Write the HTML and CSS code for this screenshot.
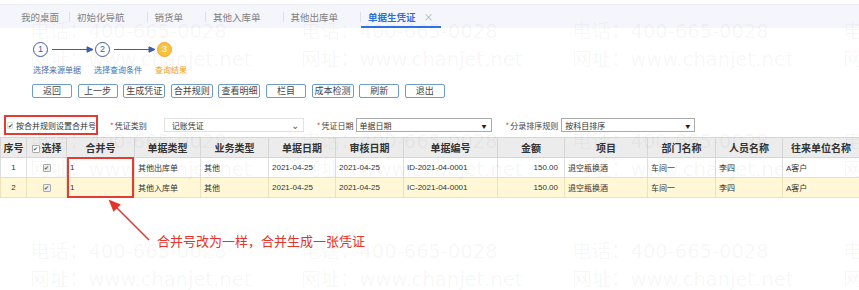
FILE: index.html
```html
<!DOCTYPE html>
<html>

<head>
    <meta charset='utf-8'>
    <title>单据生凭证</title>
    <meta name='viewport' content='width=device-width, initial-scale=1'>
    <link rel="stylesheet" href="styles.css">
</head>

<body>
    <div class="top"></div>
    <ul class="tabs">
        <li class="tab">我的桌面</li>
        <li class="tab">初始化导航</li>
        <li class="tab">销货单</li>
        <li class="tab">其他入库单</li>
        <li class="tab">其他出库单</li>
        <li class="tab on">单据生凭证<span class="close">×</span></li>
    </ul>

    <div class="steps">
        <div class="step_row">
            <span class="num">1</span>
            <svg class="arrow" viewBox="0 0 41 7"><line x1="0" y1="3.5" x2="36" y2="3.5" /><polygon points="35,0.8 41,3.5 35,6.2" /></svg>
            <span class="num">2</span>
            <svg class="arrow" viewBox="0 0 41 7"><line x1="0" y1="3.5" x2="36" y2="3.5" /><polygon points="35,0.8 41,3.5 35,6.2" /></svg>
            <span class="num cur">3</span>
        </div>
        <div class="step_txt">
            <span>选择来源单据</span>
            <span>选择查询条件</span>
            <span class="cur">查询结果</span>
        </div>
    </div>

    <div class="btns">
        <button>返回</button>
        <button>上一步</button>
        <button>生成凭证</button>
        <button>合并规则</button>
        <button>查看明细</button>
        <button>栏目</button>
        <button>成本检测</button>
        <button>刷新</button>
        <button>退出</button>
    </div>

    <div class="filter">
        <label class="merge"><span class="cb plain"></span>按合并规则设置合并号</label>
        <span class="lbl lbl_type"><i>*</i>凭证类别</span>
        <div class="sel sel_type"><span>记账凭证</span><span class="chev">⌄</span></div>
        <span class="lbl lbl_date"><i>*</i>凭证日期</span>
        <div class="sel sel_date"><span>单据日期</span><span class="tri">▼</span></div>
        <span class="lbl lbl_sort"><i>*</i>分录排序规则</span>
        <div class="sel sel_sort"><span>按科目排序</span><span class="tri">▼</span></div>
    </div>

    <div class="grid">
        <table>
            <colgroup>
                <col style="width:26px"><col style="width:40px"><col style="width:68px"><col style="width:66px">
                <col style="width:68px"><col style="width:67px"><col style="width:68px"><col style="width:94px">
                <col style="width:67px"><col style="width:83px"><col style="width:68px"><col style="width:67px">
                <col style="width:77px">
            </colgroup>
            <tr>
                <th>序号</th>
                <th><span class="cb white"></span>选择</th>
                <th>合并号</th>
                <th>单据类型</th>
                <th>业务类型</th>
                <th>单据日期</th>
                <th>审核日期</th>
                <th>单据编号</th>
                <th>金额</th>
                <th>项目</th>
                <th>部门名称</th>
                <th>人员名称</th>
                <th>往来单位名称</th>
            </tr>
            <tr>
                <td class="c">1</td>
                <td class="c"><span class="cb"></span></td>
                <td>1</td>
                <td>其他出库单</td>
                <td>其他</td>
                <td>2021-04-25</td>
                <td>2021-04-25</td>
                <td>ID-2021-04-0001</td>
                <td class="r">150.00</td>
                <td>退空瓶换酒</td>
                <td>车间一</td>
                <td>李四</td>
                <td>A客户</td>
            </tr>
            <tr class="sel_row">
                <td class="c">2</td>
                <td class="c"><span class="cb"></span></td>
                <td>1</td>
                <td>其他入库单</td>
                <td>其他</td>
                <td>2021-04-25</td>
                <td>2021-04-25</td>
                <td>IC-2021-04-0001</td>
                <td class="r">150.00</td>
                <td>退空瓶换酒</td>
                <td>车间一</td>
                <td>李四</td>
                <td>A客户</td>
            </tr>
        </table>
        <div class="mark"></div>
    </div>

    <p class="note">合并号改为一样，合并生成一张凭证</p>

    <svg class="pointer" viewBox="0 0 60 50">
        <line x1="12" y1="8" x2="49" y2="45" />
        <polygon points="10,6 19.5,9.8 13.8,15.5" />
    </svg>

    <div class="wm">
        <div>电话：400-665-0028<br>网址：www.chanjet.net</div>
        <div>电话：400-665-0028<br>网址：www.chanjet.net</div>
        <div>电话：400-665-0028<br>网址：www.chanjet.net</div>
        <div>电话：400-665-0028<br>网址：www.chanjet.net</div>
        <div>电话：400-665-0028<br>网址：www.chanjet.net</div>
        <div>电话：400-665-0028<br>网址：www.chanjet.net</div>
        <div>电话：400-665-0028<br>网址：www.chanjet.net</div>
        <div>电话：400-665-0028<br>网址：www.chanjet.net</div>
        <div>电话：400-665-0028<br>网址：www.chanjet.net</div>
        <div>电话：400-665-0028<br>网址：www.chanjet.net</div>
        <div>电话：400-665-0028<br>网址：www.chanjet.net</div>
        <div>电话：400-665-0028<br>网址：www.chanjet.net</div>
    </div>
</body>

</html>
```

FILE: styles.css
```css
* {
    margin: 0;
    padding: 0;
    box-sizing: border-box;
}

body {
    position: relative;
    width: 859px;
    height: 290px;
    overflow: hidden;
    background: #fff;
    color: #333;
    font-family: "Noto Sans CJK SC", sans-serif;
}

.top {
    height: 5px;
    border-bottom: 1px solid #eceef3;
}

/* tabs */
.tabs {
    list-style-type: none;
    display: flex;
    height: 23px;
    background: #f5f6fb;
    font-size: 9.5px;
    color: #808080;
}

.tab {
    display: flex;
    align-items: center;
    padding-left: 7px;
}

.tab::after {
    content: "";
    width: 1px;
    height: 10px;
    margin-left: 22px;
    background: #dde0e7;
}

.tab:first-child {
    padding-left: 21px;
}

.tab:first-child::after {
    margin-left: 10px;
}

.tab.on {
    color: #2a6ee0;
    font-weight: bold;
    padding-right: 7px;
    box-shadow: inset 0 -2px 0 #2f72e3;
}

.tab.on::after {
    display: none;
}

.close {
    margin-left: 8px;
    font-weight: normal;
    font-size: 10px;
    color: #b0b3ba;
}

/* steps */
.steps {
    padding: 14px 0 0 33px;
}

.step_row {
    display: flex;
    align-items: center;
    height: 15px;
}

.num {
    width: 15px;
    height: 15px;
    border: 1.5px solid #3f5ea8;
    border-radius: 50%;
    font-family: "Liberation Sans", sans-serif;
    font-size: 9px;
    line-height: 12px;
    text-align: center;
    color: #3f5ea8;
}

.num.cur {
    background: #fbc23e;
    border-color: #f3a42a;
    color: #fff;
}

.arrow {
    width: 41px;
    height: 7px;
    margin: 0 2px 0 4px;
    stroke: #3f5ea8;
    stroke-width: 1;
    fill: #3f5ea8;
}

.step_txt {
    display: flex;
    gap: 13px;
    margin-top: 8px;
    font-size: 8px;
    line-height: 10px;
    color: #3c72b8;
}

.step_txt .cur {
    color: #f39a22;
}

/* buttons */
.btns {
    display: flex;
    gap: 5.6px;
    padding-left: 32px;
    margin-top: 9px;
}

.btns button {
    min-width: 40px;
    height: 14px;
    padding: 0 2px;
    border: 1px solid #6d9cc5;
    border-radius: 2px;
    background: #fff;
    color: #444;
    font-family: "Noto Sans CJK SC", sans-serif;
    font-size: 9px;
    line-height: 12px;
}

/* filter row */
.filter {
    display: flex;
    align-items: center;
    height: 20px;
    margin-top: 17px;
    font-size: 8px;
}

.merge {
    display: flex;
    align-items: center;
    width: 94px;
    height: 20px;
    margin-left: 4px;
    padding-left: 1px;
    border: 2px solid #e33c33;
    white-space: nowrap;
}

.merge .cb {
    margin-right: 3px;
}

.lbl {
    white-space: nowrap;
    color: #444;
}

.lbl i {
    font-style: normal;
    color: #e33c33;
    margin-right: 1px;
}

.lbl_type {
    margin-left: 12px;
}

.lbl_date {
    margin-left: 13px;
}

.lbl_sort {
    margin-left: 14px;
}

.sel {
    display: flex;
    justify-content: space-between;
    align-items: center;
    height: 14px;
    padding: 0 4px 0 3px;
    border: 1px solid #aaa;
    background: #fff;
}

.sel_type {
    width: 140px;
    margin-left: 17px;
    border-color: #e2e2e2;
    padding-left: 7px;
}

.sel_date {
    width: 136px;
    margin-left: 2px;
}

.sel_sort {
    width: 134px;
    margin-left: 3px;
}

.chev {
    font-size: 10px;
    line-height: 8px;
    color: #666;
}

.tri {
    font-size: 5px;
    color: #222;
}

/* checkbox */
.cb {
    display: inline-block;
    width: 8px;
    height: 8px;
    border: 1px solid #aaa;
    border-radius: 1px;
    background: #eee;
    vertical-align: middle;
}

.cb::after {
    content: "✔";
    display: block;
    font-family: "DejaVu Sans", sans-serif;
    font-size: 6px;
    line-height: 6px;
    text-align: center;
    color: #555;
}

.cb.white {
    background: #fff;
    margin: 0 2px 1px 0;
}

.cb.plain {
    width: 6px;
    height: 7px;
    border-color: #ddd;
    background: #fff;
}

.cb.plain::after {
    color: #333;
}

/* grid */
.grid {
    position: relative;
    margin-top: 2px;
}

table {
    width: 859px;
    table-layout: fixed;
    border-collapse: collapse;
}

th {
    height: 20px;
    background: #ececec;
    border: 1px solid #d6d6d6;
    font-size: 10px;
    font-weight: bold;
    color: #333;
    white-space: nowrap;
}

td {
    height: 20px;
    padding: 0 3px;
    border: 1px solid #dedede;
    font-family: "Liberation Sans", "Noto Sans CJK SC", sans-serif;
    font-size: 8px;
    color: #333;
    white-space: nowrap;
}

td.c {
    text-align: center;
}

td.r {
    text-align: right;
    padding-right: 6px;
}

.sel_row td {
    background: #fff7d5;
    border-color: #eee2b8;
}

.mark {
    position: absolute;
    left: 67px;
    top: 20px;
    width: 67px;
    height: 41px;
    border: 2px solid #e33c33;
}

.note {
    margin: 35px 0 0 157px;
    font-size: 13px;
    line-height: 16px;
    color: #e5332a;
}

.pointer {
    position: absolute;
    left: 100px;
    top: 195px;
    width: 60px;
    height: 50px;
    stroke: #e5332a;
    stroke-width: 1.5;
    fill: #e5332a;
}

/* watermark */
.wm {
    position: absolute;
    top: 0;
    left: 0;
    width: 859px;
    height: 290px;
    overflow: hidden;
    display: grid;
    grid-template-columns: repeat(4, 271px);
    grid-template-rows: repeat(3, 110px);
    padding: 18px 0 0 30px;
    pointer-events: none;
    font-family: "DejaVu Sans", "Noto Sans CJK SC", sans-serif;
    font-size: 19.5px;
    line-height: 28px;
    white-space: nowrap;
    color: rgba(0, 0, 0, 0.045);
}
```
